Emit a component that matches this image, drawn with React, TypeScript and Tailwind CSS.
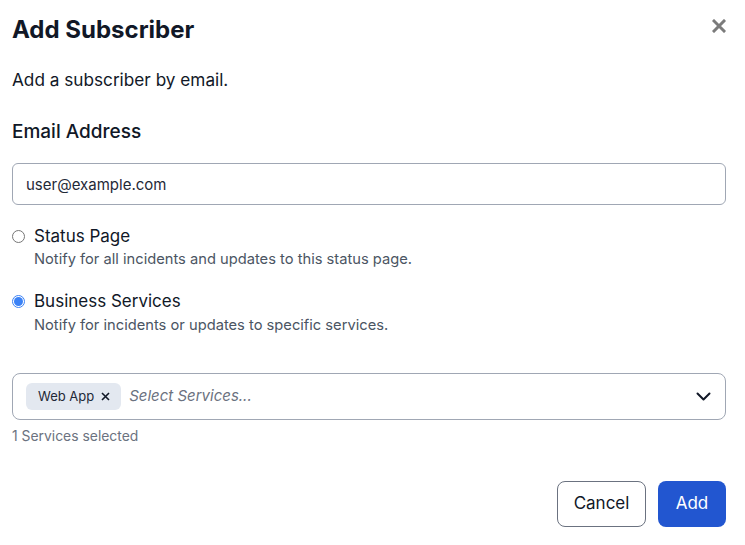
import { useState } from 'react';

const font = { fontFamily: 'Inter, "Noto Sans", sans-serif' };

const Radio = ({ checked }: { checked: boolean }) => (
  <span
    className={
      checked
        ? 'flex h-[13px] w-[13px] shrink-0 items-center justify-center rounded-full border border-[#3b82f6] bg-white'
        : 'h-[13px] w-[13px] shrink-0 rounded-full border border-[#767676] bg-white'
    }
  >
    {checked && <span className="h-[9px] w-[9px] rounded-full bg-[#3b82f6]" />}
  </span>
);

const App = () => {
  const [mode, setMode] = useState<'page' | 'services'>('services');
  const [email, setEmail] = useState('user@example.com');

  return (
    <div className="min-h-screen bg-white pl-3 pr-[19px] pt-[14px] text-[#111827]" style={font}>
      <div className="flex items-start justify-between">
        <h1 className="text-2xl font-bold leading-8">Add Subscriber</h1>
        <button className="mt-[5px] text-[#7b7b7b]" aria-label="Close">
          <svg width="14" height="14" viewBox="0 0 14 14" fill="none">
            <path d="M2 2L12 12M12 2L2 12" stroke="currentColor" strokeWidth="3" strokeLinecap="square" />
          </svg>
        </button>
      </div>

      <p className="mt-[22px] text-[17.2px] leading-6">Add a subscriber by email.</p>

      <label className="mt-[26px] block text-[19px] font-medium leading-7">Email Address</label>
      <input
        value={email}
        onChange={(e) => setEmail(e.target.value)}
        className="mt-[17px] block h-[42px] w-full rounded-md border border-[#a0a7b4] px-[13px] text-[15px] text-[#1f2937] outline-none"
      />

      <div className="mt-[19px] cursor-pointer" onClick={() => setMode('page')}>
        <div className="flex items-center gap-[9px]">
          <Radio checked={mode === 'page'} />
          <span className="text-[17px] leading-6">Status Page</span>
        </div>
        <p className="ml-[22px] mt-px text-[14.7px] leading-5 text-[#4b5563]">
          Notify for all incidents and updates to this status page.
        </p>
      </div>

      <div className="mt-5 cursor-pointer" onClick={() => setMode('services')}>
        <div className="flex items-center gap-[9px]">
          <Radio checked={mode === 'services'} />
          <span className="text-[17px] leading-6">Business Services</span>
        </div>
        <p className="ml-[22px] mt-0.5 text-[14.7px] leading-5 text-[#4b5563]">
          Notify for incidents or updates to specific services.
        </p>
      </div>

      <div className="mt-[38px] flex h-[47px] items-center rounded-lg border border-[#a0a7b4] pl-[13px] pr-[14px]">
        <span className="flex h-[27px] items-center gap-[7px] rounded-md bg-[#e3e8f0] pl-3 pr-[11px] text-[13px] text-[#1f2937]">
          Web App
          <svg width="9" height="9" viewBox="0 0 9 9" fill="none">
            <path d="M1 1L8 8M8 1L1 8" stroke="#111827" strokeWidth="1.6" />
          </svg>
        </span>
        <span className="ml-2 flex-1 text-[15px] italic text-[#6b7280]">Select Services...</span>
        <svg width="15" height="9" viewBox="0 0 15 9" fill="none">
          <path d="M1.5 1.5L7.5 7.5L13.5 1.5" stroke="#111827" strokeWidth="2" strokeLinecap="round" strokeLinejoin="round" />
        </svg>
      </div>
      <p className="mt-1.5 text-[13.9px] leading-5 text-[#6b7280]">1 Services selected</p>

      <div className="mt-[35px] flex justify-end gap-3">
        <button className="h-[46px] w-[89px] rounded-lg border border-[#6b7280] bg-white text-[17px] text-[#111827]">
          Cancel
        </button>
        <button className="h-[46px] w-[68px] rounded-lg bg-[#2256d0] text-[17px] text-white">Add</button>
      </div>
    </div>
  );
};

export default App;
